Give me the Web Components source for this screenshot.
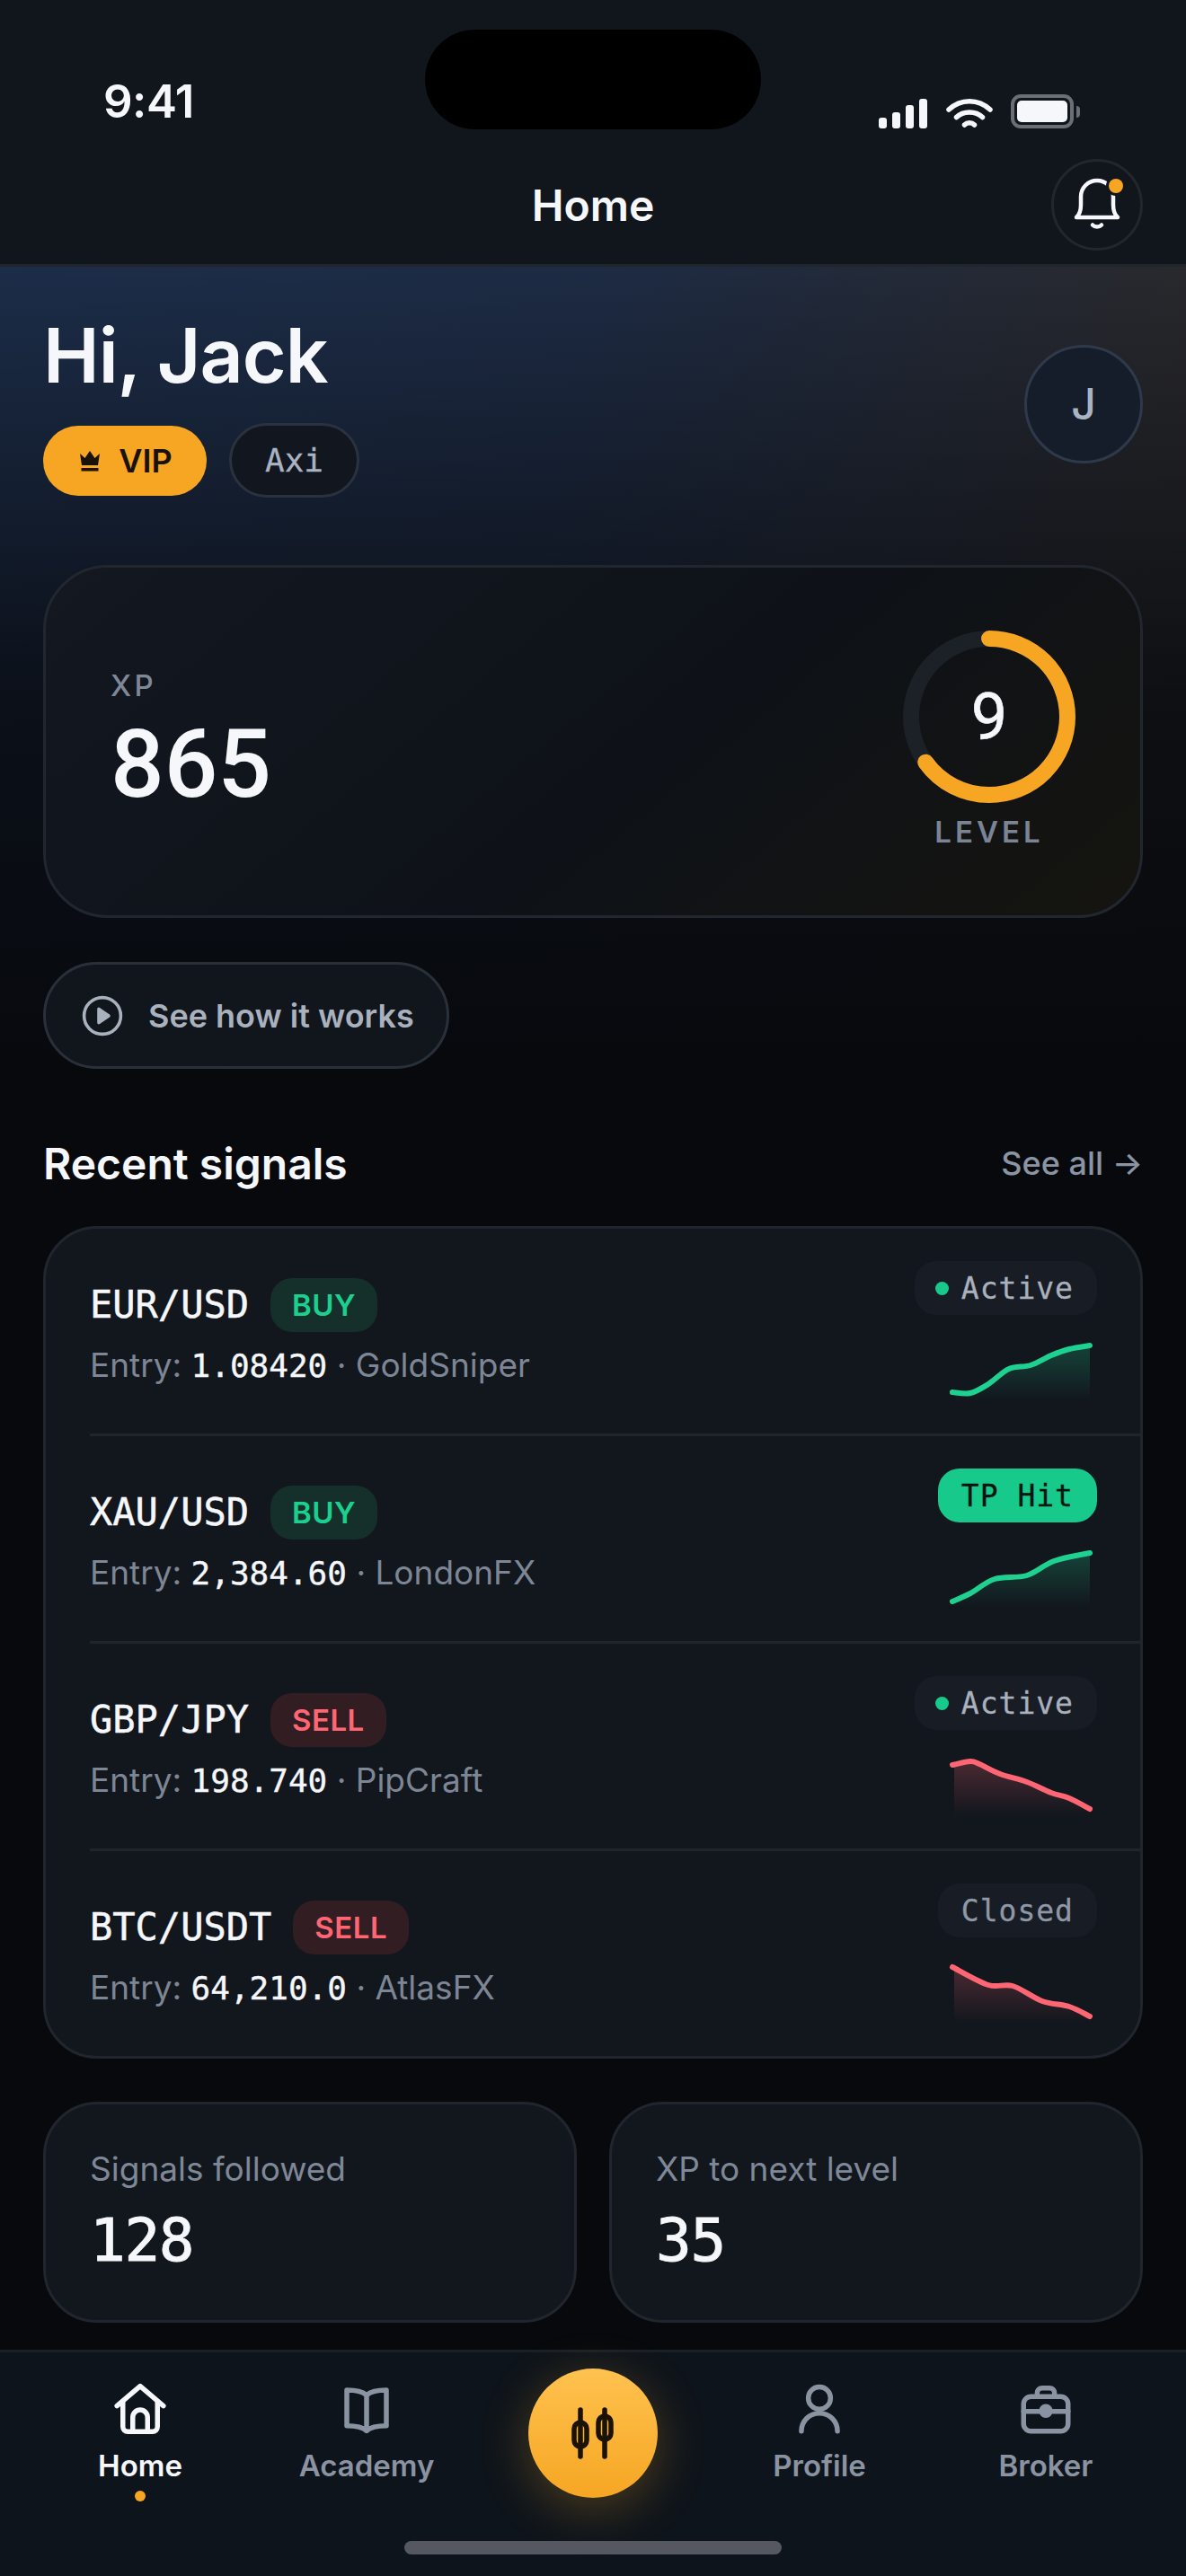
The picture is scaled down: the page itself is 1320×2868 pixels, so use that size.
<!DOCTYPE html>
<html lang="en">
<head>
<meta charset="utf-8">
<title>Home</title>
<style>
  html, body { margin: 0; padding: 0; }
  body {
    width: 1320px;
    height: 2868px;
    overflow: hidden;
    display: flex;
    flex-direction: column;
    background: #07090d;
    color: #f5f7fb;
    font-family: Inter, "Liberation Sans", sans-serif;
  }
</style>
</head>
<body>
  <app-topbar title="Home"></app-topbar>

  <home-main>
    <hero-greeting name="Jack" broker="Axi" initial="J"></hero-greeting>
    <xp-card xp="865" level="9" progress="65"></xp-card>
    <how-button>See how it works</how-button>

    <section-head link="See all →">Recent signals</section-head>

    <signal-list>
      <signal-row side="buy" status="active" points="0,56 20,57 40,47 63,30 87,26 110,15 130,8 153,4">
        <span slot="pair">EUR/USD</span><span slot="entry">1.08420</span><span slot="source">GoldSniper</span>
      </signal-row>
      <signal-row side="buy" status="tp" points="0,58 20,49 47,33 83,29 113,13 153,4">
        <span slot="pair">XAU/USD</span><span slot="entry">2,384.60</span><span slot="source">LondonFX</span>
      </signal-row>
      <signal-row side="sell" status="active" points="0,9 20,5 30,8 53,19 83,28 110,40 130,46 153,58">
        <span slot="pair">GBP/JPY</span><span slot="entry">198.740</span><span slot="source">PipCraft</span>
      </signal-row>
      <signal-row side="sell" status="closed" last points="0,3 40,23 67,24 100,41 130,47 153,58">
        <span slot="pair">BTC/USDT</span><span slot="entry">64,210.0</span><span slot="source">AtlasFX</span>
      </signal-row>
    </signal-list>

    <stat-grid>
      <stat-card label="Signals followed" value="128"></stat-card>
      <stat-card label="XP to next level" value="35"></stat-card>
    </stat-grid>
  </home-main>

  <tab-bar>
    <tab-item label="Home" active>
      <svg viewBox="0 0 24 24" fill="none" stroke="currentColor" stroke-width="2" stroke-linecap="round" stroke-linejoin="round">
        <path d="M2.6 10.8 12 2.8l9.4 8"/>
        <path d="M5 9v10.2a2 2 0 0 0 2 2h10a2 2 0 0 0 2-2V9"/>
        <path d="M9 21v-5.6a3 3 0 0 1 6 0V21"/>
      </svg>
    </tab-item>
    <tab-item label="Academy">
      <svg viewBox="0 0 24 24" fill="none" stroke="currentColor" stroke-width="2" stroke-linecap="round" stroke-linejoin="round">
        <path d="M12 6.4C10.4 5 8 4.4 4 4.4v14.4c4 0 6.4.5 8 2 1.6-1.5 4-2 8-2V4.4c-4 0-6.4.6-8 2z"/>
        <path d="M12 6.4v14.4"/>
      </svg>
    </tab-item>
    <trade-button></trade-button>
    <tab-item label="Profile">
      <svg viewBox="0 0 24 24" fill="none" stroke="currentColor" stroke-width="2" stroke-linecap="round" stroke-linejoin="round">
        <circle cx="12" cy="7.6" r="4.5"/>
        <path d="M4.7 21a7.300 7.300 0 0 1 14.600 0"/>
      </svg>
    </tab-item>
    <tab-item label="Broker">
      <svg viewBox="0 0 24 24" fill="none" stroke="currentColor" stroke-width="2" stroke-linecap="round" stroke-linejoin="round">
        <rect x="3" y="7" width="18" height="14" rx="3"/>
        <path d="M8.5 7V5.5a2 2 0 0 1 2-2h3a2 2 0 0 1 2 2V7"/>
        <path d="M3 13h18"/>
        <circle cx="12" cy="12.8" r="1.8" fill="currentColor"/>
      </svg>
    </tab-item>
  </tab-bar>

<script>
const MONO = '"DejaVu Sans Mono", "Liberation Mono", monospace';

function attach(host, html) {
    const root = host.attachShadow({ mode: 'open' });
    root.innerHTML = html;
    return root;
}

class AppTopbar extends HTMLElement {
    constructor() {
        super();
        attach(this, `
        <style>
            :host { display: block; position: relative; height: 297px; box-sizing: border-box;
                    background: #11151c; border-bottom: 3px solid #20242b; }
            .island { position: absolute; left: 473px; top: 33px; width: 374px; height: 111px;
                      border-radius: 56px; background: #000; }
            .status { height: 177px; box-sizing: border-box; padding: 83px 118px 0 115px;
                      display: flex; justify-content: space-between; }
            .time { font-size: 51px; font-weight: 600; line-height: 60px; letter-spacing: -0.5px; }
            .icons { display: flex; align-items: flex-start; gap: 21px; padding-top: 25px; }
            .title-row { height: 102px; padding: 0 48px; display: grid; grid-template-columns: 102px 1fr 102px; align-items: center; }
            .title { text-align: center; font-size: 48px; font-weight: 600; }
            .bell { position: relative; width: 102px; height: 102px; box-sizing: border-box;
                    border: 3px solid #22262d; border-radius: 50%; display: flex; align-items: center; justify-content: center; }
            .bell svg { display: block; }
            .dot { position: absolute; left: 61px; top: 19px; width: 16px; height: 16px; border-radius: 50%;
                   background: #f6a623; box-shadow: 0 0 0 3px #11151c; }
        </style>
        <div class="island"></div>
        <div class="status">
            <div class="time">9:41</div>
            <div class="icons">
                <svg width="54" height="33" viewBox="0 0 54 33" fill="#f5f7fb" style="margin-top:2px">
                    <rect x="0" y="21" width="9" height="12" rx="3"/>
                    <rect x="15" y="15" width="9" height="18" rx="3"/>
                    <rect x="30" y="7" width="9" height="26" rx="3"/>
                    <rect x="45" y="0" width="9" height="33" rx="3"/>
                </svg>
                <svg width="52" height="34" viewBox="0 0 52 34" fill="none" stroke="#f5f7fb" stroke-width="5.5" stroke-linecap="round" style="margin-top:0">
                    <path d="M3 14C16 1.500 36 1.500 49 14"/>
                    <path d="M11.500 22.500C19 15 33 15 40.500 22.500"/>
                    <path d="M20.500 31c3-3 8-3 11 0"/>
                </svg>
                <div style="display:flex;align-items:center;gap:3px;margin-left:-1px;margin-top:-3px">
                    <div style="width:70px;height:38px;box-sizing:border-box;border:4px solid #6a6e75;border-radius:11px;padding:3px">
                        <div style="width:100%;height:100%;background:#f5f7fb;border-radius:5px"></div>
                    </div>
                    <div style="width:4px;height:13px;background:#6a6e75;border-radius:0 4px 4px 0"></div>
                </div>
            </div>
        </div>
        <div class="title-row">
            <span></span>
            <div class="title"></div>
            <div class="bell">
                <svg width="66" height="66" viewBox="0 0 66 66" fill="none" stroke="#f5f7fb" stroke-width="4.5" stroke-linecap="round" stroke-linejoin="round">
                    <path d="M10 47c3.500-3 5-8 5-14V24a18 18 0 0 1 36 0v9c0 6 1.500 11 5 14z"/>
                    <path d="M28 55.500c2.500 2.500 7.500 2.500 10 0"/>
                </svg>
                <span class="dot"></span>
            </div>
        </div>`);
    }
    connectedCallback() {
        this.shadowRoot.querySelector('.title').textContent = this.getAttribute('title');
    }
}
customElements.define('app-topbar', AppTopbar);

class HomeMain extends HTMLElement {
    constructor() {
        super();
        attach(this, `
        <style>
            :host { display: flex; flex-direction: column; flex: 1; min-height: 0; box-sizing: border-box;
                    padding: 48px 48px 30px;
                    background:
                      linear-gradient(to bottom, rgba(7,9,13,0) 0, rgba(7,9,13,.5) 300px, rgba(7,9,13,.8) 480px, rgba(7,9,13,1) 900px),
                      linear-gradient(100deg, #1c2d49 0%, #1d2b44 38%, #2c2826 88%, #252321 100%); }
        </style>
        <slot></slot>`);
    }
}
customElements.define('home-main', HomeMain);

class HeroGreeting extends HTMLElement {
    constructor() {
        super();
        attach(this, `
        <style>
            :host { display: flex; justify-content: space-between; align-items: center; }
            h1 { margin: 0 0 25px; font-size: 84px; line-height: 101px; font-weight: 600; letter-spacing: -1px; }
            .pills { display: flex; align-items: center; gap: 25px; }
            .vip { height: 78px; width: 182px; border-radius: 39px; background: #f6a623; color: #1a1208;
                   display: flex; align-items: center; justify-content: center; gap: 20px;
                   font-size: 36px; font-weight: 600; }
            .vip svg { display: block; margin-left: 2px; }
            .broker { height: 83px; box-sizing: border-box; padding: 0 37px; border: 3px solid #2a3240; border-radius: 42px;
                      background: #12161e; color: #a9b3c2; display: flex; align-items: center;
                      font-family: ${MONO}; font-size: 36px; -webkit-text-stroke: .3px #a9b3c2; }
            .avatar { width: 132px; height: 132px; box-sizing: border-box; border: 3px solid #2e3a4b; border-radius: 50%;
                      background: #161d2a; color: #a9b3c2; display: flex; align-items: center; justify-content: center;
                      font-size: 48px; font-weight: 500; }
        </style>
        <div>
            <h1></h1>
            <div class="pills">
                <div class="vip">
                    <svg width="24" height="24" viewBox="0 0 24 24" fill="#1a1208">
                        <path d="M1 4l5.500 5L12 1l5.500 8L23 4l-2 13H3z"/>
                        <rect x="2.5" y="20" width="19" height="3.5"/>
                    </svg>
                    <span>VIP</span>
                </div>
                <div class="broker"></div>
            </div>
        </div>
        <div class="avatar"></div>`);
    }
    connectedCallback() {
        const root = this.shadowRoot;
        root.querySelector('h1').textContent = `Hi, ${this.getAttribute('name')}`;
        root.querySelector('.broker').textContent = this.getAttribute('broker');
        root.querySelector('.avatar').textContent = this.getAttribute('initial');
    }
}
customElements.define('hero-greeting', HeroGreeting);

class XpCard extends HTMLElement {
    constructor() {
        super();
        attach(this, `
        <style>
            :host { display: flex; justify-content: space-between; align-items: center; box-sizing: border-box;
                    height: 393px; margin-top: 75px; padding: 0 72px; border: 3px solid #21262f; border-radius: 72px;
                    background: linear-gradient(140deg, #131821 0%, #0e1218 55%, #15140f 100%); }
            .left { padding-bottom: 6px; }
            .label { font-size: 33px; line-height: 46px; font-weight: 500; letter-spacing: 3.3px; color: #7f8897; }
            .xp { margin-top: 12px; font-family: Roboto, sans-serif; font-size: 105px; line-height: 108px; font-weight: 500; }
            .col { display: flex; flex-direction: column; align-items: center; gap: 9px; }
            .ring { position: relative; width: 192px; height: 192px; }
            .ring svg { display: block; transform: rotate(-90deg); }
            .num { position: absolute; inset: 0; display: flex; align-items: center; justify-content: center;
                   font-family: Roboto, sans-serif; font-size: 72px; font-weight: 400; -webkit-text-stroke: .6px #f5f7fb; }
            .level { font-size: 33px; line-height: 46px; font-weight: 600; letter-spacing: 4px; color: #7a8494; }
        </style>
        <div class="left">
            <div class="label">XP</div>
            <div class="xp"></div>
        </div>
        <div class="col">
            <div class="ring">
                <svg width="192" height="192" viewBox="0 0 192 192" fill="none" stroke-width="18">
                    <circle cx="96" cy="96" r="87" stroke="#1c2027"/>
                    <circle class="arc" cx="96" cy="96" r="87" stroke="#f6a623" stroke-linecap="round"/>
                </svg>
                <div class="num"></div>
            </div>
            <div class="level">LEVEL</div>
        </div>`);
    }
    connectedCallback() {
        const root = this.shadowRoot;
        root.querySelector('.xp').textContent = this.getAttribute('xp');
        root.querySelector('.num').textContent = this.getAttribute('level');
        const len = 2 * Math.PI * 87;
        const arc = root.querySelector('.arc');
        arc.setAttribute('stroke-dasharray', `${len * this.getAttribute('progress') / 100} ${len}`);
    }
}
customElements.define('xp-card', XpCard);

class HowButton extends HTMLElement {
    constructor() {
        super();
        attach(this, `
        <style>
            :host { display: inline-flex; align-self: flex-start; align-items: center; gap: 27px; box-sizing: border-box;
                    height: 119px; margin-top: 49px; padding: 0 36px 0 39px; border: 3px solid #2a3039; border-radius: 60px;
                    background: #11151c; color: #a9b1bd; font-size: 36px; font-weight: 600; }
            svg { display: block; }
        </style>
        <svg width="48" height="48" viewBox="0 0 24 24" fill="none" stroke="currentColor" stroke-width="1.8" stroke-linejoin="round">
            <circle cx="12" cy="12" r="10.2"/>
            <path d="M10 8.200l5.500 3.800-5.500 3.800z" fill="currentColor"/>
        </svg>
        <slot></slot>`);
    }
}
customElements.define('how-button', HowButton);

class SectionHead extends HTMLElement {
    constructor() {
        super();
        attach(this, `
        <style>
            :host { display: flex; justify-content: space-between; align-items: center; height: 64px; margin: 73px 0 38px; }
            .title { font-size: 48px; font-weight: 600; }
            .link { font-size: 36px; font-weight: 500; color: #8b94a2; }
        </style>
        <div class="title"><slot></slot></div>
        <div class="link"></div>`);
    }
    connectedCallback() {
        this.shadowRoot.querySelector('.link').textContent = this.getAttribute('link');
    }
}
customElements.define('section-head', SectionHead);

class SignalList extends HTMLElement {
    constructor() {
        super();
        attach(this, `
        <style>
            :host { display: block; box-sizing: border-box; border: 3px solid #21262e; border-radius: 60px; background: #12161d; overflow: hidden; }
        </style>
        <slot></slot>`);
    }
}
customElements.define('signal-list', SignalList);

class SparkLine extends HTMLElement {
    constructor() {
        super();
        attach(this, `
        <style>
            :host { display: block; width: 156px; height: 66px; }
            svg { display: block; overflow: visible; }
        </style>
        <svg width="156" height="66" viewBox="0 0 156 66" fill="none">
            <defs>
                <linearGradient id="fill" x1="0" y1="0" x2="0" y2="1">
                    <stop offset="0" stop-opacity=".24"/>
                    <stop offset="1" stop-opacity="0"/>
                </linearGradient>
            </defs>
            <path class="area" fill="url(#fill)"/>
            <path class="line" stroke-width="6" stroke-linecap="round" stroke-linejoin="round"/>
        </svg>`);
    }
    connectedCallback() {
        const color = this.getAttribute('color');
        const pts = this.getAttribute('points').trim().split(/\s+/).map(p => p.split(',').map(Number));
        let d = `M${pts[0][0]} ${pts[0][1]}`;
        // catmull-rom through the points so the line reads smooth
        for (let i = 0; i < pts.length - 1; i++) {
            const p0 = pts[i - 1] || pts[i];
            const p1 = pts[i];
            const p2 = pts[i + 1];
            const p3 = pts[i + 2] || p2;
            const c1 = [p1[0] + (p2[0] - p0[0]) / 6, p1[1] + (p2[1] - p0[1]) / 6];
            const c2 = [p2[0] - (p3[0] - p1[0]) / 6, p2[1] - (p3[1] - p1[1]) / 6];
            d += `C${c1[0]} ${c1[1]} ${c2[0]} ${c2[1]} ${p2[0]} ${p2[1]}`;
        }
        const root = this.shadowRoot;
        const line = root.querySelector('.line');
        line.setAttribute('d', d);
        line.setAttribute('stroke', color);
        root.querySelector('.area').setAttribute('d', `${d}L${pts[pts.length - 1][0]} 66L2 66L2 ${pts[0][1]}Z`);
        root.querySelectorAll('stop').forEach(s => s.setAttribute('stop-color', color));
    }
}
customElements.define('spark-line', SparkLine);

class SignalRow extends HTMLElement {
    constructor() {
        super();
        attach(this, `
        <style>
            :host { display: flex; justify-content: space-between; align-items: center; box-sizing: border-box;
                    margin-left: 49px; padding: 36px 48px 36px 0; border-bottom: 3px solid #20252c; }
            :host([last]) { border-bottom: 0; }
            .top { display: flex; align-items: center; gap: 24px; height: 60px; margin-top: 2px; }
            .pair { font-family: ${MONO}; font-size: 42px; color: #f5f7fb; -webkit-text-stroke: .5px #f5f7fb; }
            .side { height: 60px; padding: 0 24px; border-radius: 24px; display: flex; align-items: center;
                    font-size: 33px; font-weight: 600; letter-spacing: .5px; }
            :host([side="buy"]) .side { background: #15302a; color: #1bd08f; }
            :host([side="sell"]) .side { background: #321d23; color: #ff6673; }
            .entry { margin-top: 13px; font-size: 37px; line-height: 47px; color: #7d8694; }
            .entry ::slotted([slot="entry"]) { font-family: ${MONO}; font-size: 36px; color: #f5f7fb; -webkit-text-stroke: .4px #f5f7fb; }
            .right { display: flex; flex-direction: column; align-items: flex-end; gap: 30px; }
            .chip { height: 60px; box-sizing: border-box; padding: 0 26px; border-radius: 24px; background: #181c25;
                    display: flex; align-items: center; gap: 14px; font-family: ${MONO}; font-size: 33px; letter-spacing: 1px;
                    color: #a9b1bd; -webkit-text-stroke: .3px currentColor; }
            .chip.tp { background: #17c98a; color: #06140f; }
            .chip.closed { color: #8f98a5; }
            .chip i { width: 15px; height: 15px; margin-left: -3px; border-radius: 50%; background: #17c98a; }
            spark-line { margin-right: 5px; }
        </style>
        <div>
            <div class="top">
                <span class="pair"><slot name="pair"></slot></span>
                <span class="side"></span>
            </div>
            <div class="entry">Entry: <slot name="entry"></slot> · <slot name="source"></slot></div>
        </div>
        <div class="right">
            <div class="chip"></div>
        </div>`);
    }
    connectedCallback() {
        const root = this.shadowRoot;
        const side = this.getAttribute('side');
        const status = this.getAttribute('status');
        root.querySelector('.side').textContent = side.toUpperCase();
        const chip = root.querySelector('.chip');
        if (status === 'active') {
            chip.innerHTML = '<i></i><span>Active</span>';
        } else {
            chip.textContent = status === 'tp' ? 'TP Hit' : 'Closed';
            chip.classList.add(status);
        }
        // spark reads its attributes when connected, so set them before appending
        const spark = document.createElement('spark-line');
        spark.setAttribute('color', side === 'buy' ? '#1fd190' : '#ff6673');
        spark.setAttribute('points', this.getAttribute('points'));
        root.querySelector('.right').appendChild(spark);
    }
}
customElements.define('signal-row', SignalRow);

class StatGrid extends HTMLElement {
    constructor() {
        super();
        attach(this, `
        <style>
            :host { display: grid; grid-template-columns: 1fr 1fr; gap: 36px; margin-top: 48px; }
        </style>
        <slot></slot>`);
    }
}
customElements.define('stat-grid', StatGrid);

class StatCard extends HTMLElement {
    constructor() {
        super();
        attach(this, `
        <style>
            :host { display: block; box-sizing: border-box; height: 246px; padding: 48px 49px 0; border: 3px solid #21262e; border-radius: 60px; background: #12161d; }
            .label { font-size: 37px; line-height: 47px; color: #7f8897; }
            .value { margin-top: 18px; font-family: ${MONO}; font-size: 66px; line-height: 78px; letter-spacing: -1.3px; -webkit-text-stroke: 1px #f5f7fb; }
        </style>
        <div class="label"></div>
        <div class="value"></div>`);
    }
    connectedCallback() {
        this.shadowRoot.querySelector('.label').textContent = this.getAttribute('label');
        this.shadowRoot.querySelector('.value').textContent = this.getAttribute('value');
    }
}
customElements.define('stat-card', StatCard);

class TabBar extends HTMLElement {
    constructor() {
        super();
        attach(this, `
        <style>
            :host { display: block; position: relative; height: 252px; box-sizing: border-box; border-top: 3px solid #1b2027; background: #0e141b; }
            .tabs { display: grid; grid-template-columns: repeat(5, 252px); padding: 30px 30px 0; }
            .home-bar { position: absolute; left: 450px; bottom: 24px; width: 420px; height: 15px; border-radius: 8px; background: #55585f; }
        </style>
        <div class="tabs"><slot></slot></div>
        <div class="home-bar"></div>`);
    }
}
customElements.define('tab-bar', TabBar);

class TabItem extends HTMLElement {
    constructor() {
        super();
        attach(this, `
        <style>
            :host { display: flex; flex-direction: column; align-items: center; color: #8a93a1; }
            :host([active]) { color: #f5f7fb; }
            ::slotted(svg) { display: block; width: 66px; height: 66px; }
            .label { margin-top: 8px; font-size: 33px; line-height: 44px; font-weight: 600; }
            .dot { display: none; width: 12px; height: 12px; margin-top: 6px; border-radius: 50%; background: #f6a623; }
            :host([active]) .dot { display: block; }
        </style>
        <slot></slot>
        <div class="label"></div>
        <div class="dot"></div>`);
    }
    connectedCallback() {
        this.shadowRoot.querySelector('.label').textContent = this.getAttribute('label');
    }
}
customElements.define('tab-item', TabItem);

class TradeButton extends HTMLElement {
    constructor() {
        super();
        attach(this, `
        <style>
            :host { display: flex; justify-content: center; }
            .btn { width: 144px; height: 144px; margin-top: -12px; border-radius: 50%;
                   background: linear-gradient(180deg, #ffc24f 0%, #f6a623 100%);
                   box-shadow: 0 12px 54px rgba(246,166,35,.28);
                   display: flex; align-items: center; justify-content: center; }
            svg { display: block; }
        </style>
        <div class="btn">
            <svg width="72" height="72" viewBox="0 0 72 72" fill="none" stroke="#1a1205" stroke-width="5.5" stroke-linecap="round">
                <path d="M22 10v52"/>
                <rect x="15" y="24" width="14" height="27" rx="7"/>
                <path d="M49 10v52"/>
                <rect x="42" y="17" width="14" height="26" rx="7"/>
            </svg>
        </div>`);
    }
}
customElements.define('trade-button', TradeButton);
</script>
</body>
</html>
